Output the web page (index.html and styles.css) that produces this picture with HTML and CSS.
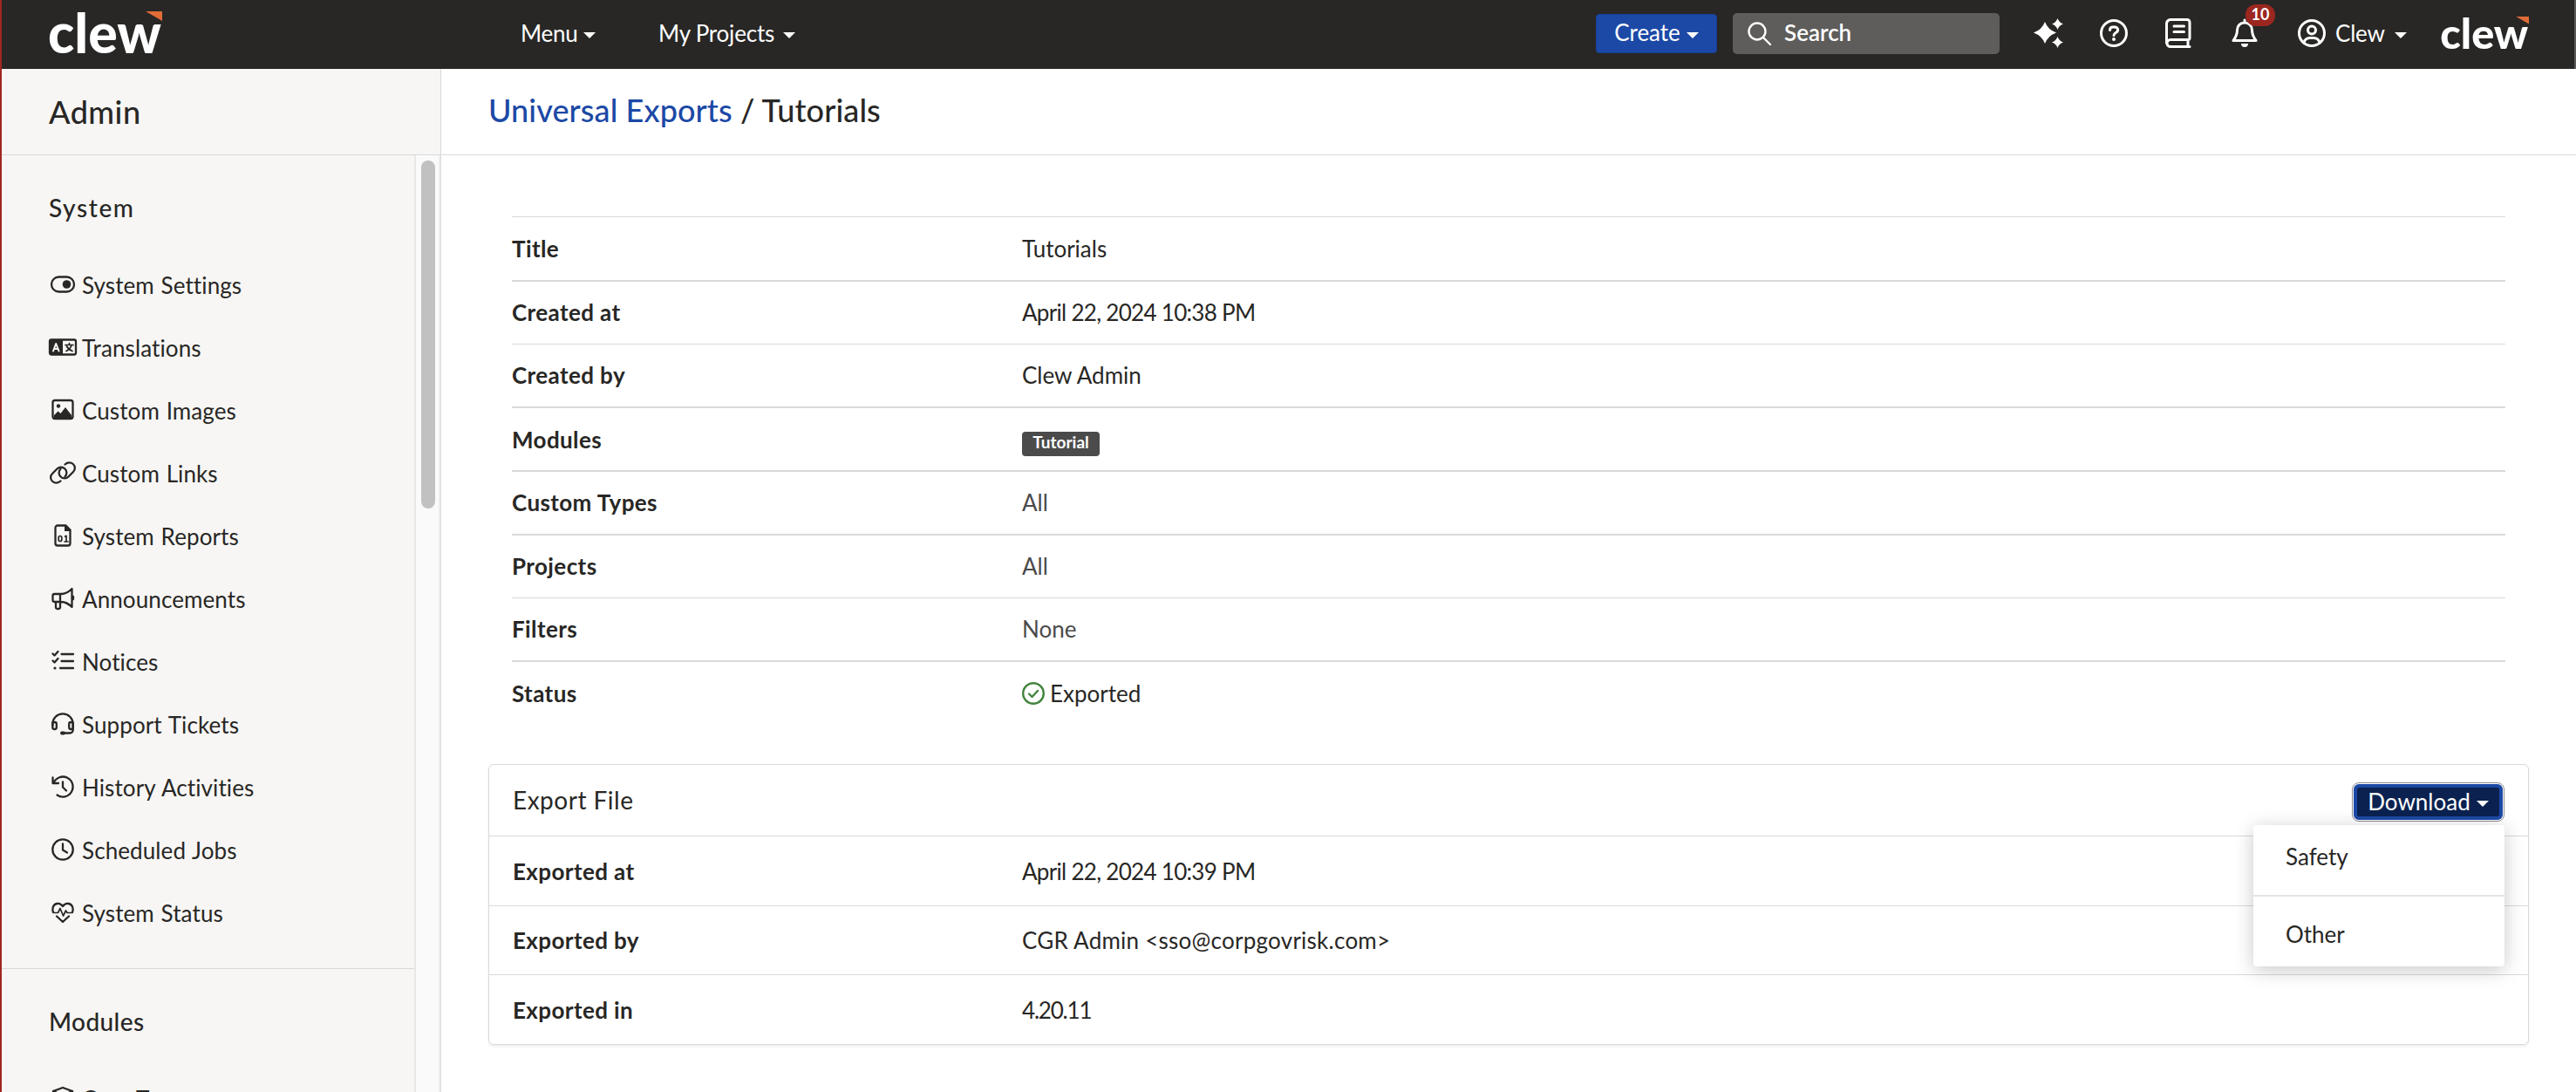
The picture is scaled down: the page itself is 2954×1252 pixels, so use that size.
FILE: index.html
```html
<!DOCTYPE html>
<html lang="en">
<head>
  <meta charset="UTF-8">
  <title>Universal Exports / Tutorials</title>
  <link rel="stylesheet" href="styles.css">
</head>
<body>
  <header class="navbar">
    <svg class="logo" viewBox="0 0 130 50">
      <text x="-1" y="48" textLength="130" lengthAdjust="spacingAndGlyphs">clew</text>
      <path class="logo-mark" d="M111 0h19v11z"/>
    </svg>
    <a class="nav-link menu-link">Menu<i class="caret"></i></a>
    <a class="nav-link projects-link">My Projects<i class="caret"></i></a>
    <div class="nav-right">
      <button class="btn create">Create<i class="caret"></i></button>
      <div class="search">
        <svg width="27" height="27" viewBox="0 0 27 27"><circle cx="11" cy="11" r="9.5"/><path d="M18 18l8 8"/></svg>
        <span>Search</span>
      </div>
      <svg class="nav-icon sparkle" width="34" height="34" viewBox="0 0 34 34">
        <path d="M13 4q3.400 9 13 12.500q-9.600 3.500-13 12.500q-3.400-9-13-12.500q9.600-3.500 13-12.500zM27.500 0q1.600 4.700 6.500 6.500q-4.900 1.800-6.500 6.500q-1.600-4.700-6.500-6.500q4.900-1.800 6.500-6.500zM27.500 21q1.600 4.700 6.500 6.500q-4.900 1.800-6.500 6.500q-1.600-4.700-6.500-6.500q4.900-1.800 6.500-6.500z"/>
      </svg>
      <svg class="nav-icon help" width="32" height="32" viewBox="0 0 32 32">
        <circle cx="16" cy="16" r="14.500"/>
        <path d="M11.500 12.500c0-2.300 1.500-3.500 3.500-3.500h2c2 0 3.700 1.400 3.700 3.500c0 3-4.700 3.200-4.700 6"/>
        <circle class="solid" cx="16" cy="23" r="2"/>
      </svg>
      <svg class="nav-icon book" width="30" height="34" viewBox="0 0 30 34">
        <path d="M6 1.500h19a3 3 0 0 1 3 3v18a2 2 0 0 1-2 2H6a4 4 0 0 0 0 8h22M1.500 28.500V6A4.500 4.500 0 0 1 6 1.500M26 25v7M10 9h11.500M10 15.500h11.500"/>
      </svg>
      <div class="bell">
        <svg class="nav-icon" width="30" height="32" viewBox="0 0 30 32">
          <path d="M15 1v3M15 4c-5 0-8.500 3.600-8.500 8.500c0 5.500-1.500 8-4.500 12h26c-3-4-4.500-6.500-4.500-12C23.500 7.600 20 4 15 4z"/>
          <path class="solid" d="M11 28h8a4 4 0 0 1-8 0z"/>
        </svg>
        <span class="count">10</span>
      </div>
      <svg class="nav-icon user" width="32" height="32" viewBox="0 0 32 32">
        <circle cx="16" cy="16" r="14.500"/><circle cx="16" cy="12.500" r="4.500"/>
        <path d="M7 27c1-4 4-5.500 7-5.500h4c3 0 6 1.500 7 5.500"/>
      </svg>
      <a class="nav-link account">Clew<i class="caret"></i></a>
      <svg class="logo small" viewBox="0 0 130 50">
        <text x="-1" y="48" textLength="130" lengthAdjust="spacingAndGlyphs">clew</text>
        <path class="logo-mark" d="M111 0h19v11z"/>
      </svg>
    </div>
  </header>

  <div class="layout">
    <aside class="sidebar">
      <h1 class="sidebar-title">Admin</h1>
      <div class="sidebar-body">
        <nav class="sections">
          <section class="section">
            <h2 class="wide">System</h2>
            <a class="item"><svg viewBox="0 0 32 26"><rect x="3" y="4.500" width="26" height="17" rx="8.500"/><circle class="solid" cx="20.500" cy="13" r="4.800"/></svg><span>System Settings</span></a>
            <a class="item"><svg viewBox="0 0 32 26"><rect x="1" y="4.500" width="30" height="17" rx="2"/><path class="solid" d="M1 4.500h15v17H1z"/><path class="cut" d="M5 17.500L8.200 9l3.300 8.500M6.300 15h4"/><path class="thin" d="M19 10.500h9M23.500 8.500v2M26 11c-1 3-3 5-6 6.500M20.500 12c1.500 3 3 4 6.500 5.500"/></svg><span>Translations</span></a>
            <a class="item"><svg viewBox="0 0 32 26"><rect x="4.500" y="2" width="23" height="21" rx="2.500"/><circle class="solid" cx="11" cy="8.500" r="2.200"/><path class="solid" d="M6 22v-3l4.500-4.500 3 2.500L19 10l7 9v3z"/></svg><span>Custom Images</span></a>
            <a class="item"><svg viewBox="0 0 32 26"><path d="M13.500 22.500c-3 3-7 2.500-9.300.500c-2.800-2.500-2.700-6.500-.200-9l5.500-5.500c2.500-2.500 6.500-2.500 9 0s2.500 6.500 0 9"/><path d="M18.500 3.500c3-3 7-2.500 9.300-.5c2.800 2.500 2.700 6.500.200 9L22.500 17.500c-2.500 2.500-6.500 2.500-9 0s-2.500-6.500 0-9"/></svg><span>Custom Links</span></a>
            <a class="item"><svg viewBox="0 0 32 26"><path d="M10 1.500h9.500l5 5V22a2.500 2.500 0 0 1-2.500 2.500H10A2.500 2.500 0 0 1 7.500 22V4A2.500 2.500 0 0 1 10 1.500z"/><path class="solid" d="M18 1v7h7z"/><rect class="thin" x="11.200" y="13.500" width="3.600" height="6" rx="1.800"/><path class="thin" d="M18.500 14l1.500-.7v6.500M18 20h4"/></svg><span>System Reports</span></a>
            <a class="item"><svg viewBox="0 0 32 26"><path d="M6.500 8H14c5 0 9-2.500 12.500-6v21C23 19.500 19 17 14 17H6.500a2 2 0 0 1-2-2v-5a2 2 0 0 1 2-2zM13 8v9M8 17v6.500a1.500 1.500 0 0 0 1.500 1.500h2a1.500 1.500 0 0 0 1.500-1.500V17M28 11v3"/></svg><span>Announcements</span></a>
            <a class="item"><svg viewBox="0 0 32 26"><path d="M4.500 4.500l2 2 4-4.500M4.500 12.500l2 2 4-4.500M14.500 5H28M14.500 13H28M13 21h15"/><circle class="solid" cx="7" cy="21" r="1.600"/></svg><span>Notices</span></a>
            <a class="item"><svg viewBox="0 0 32 26"><path d="M4.300 15v-2a11.700 11.700 0 0 1 23.400 0v7a3.500 3.500 0 0 1-3.500 3.500H17"/><rect x="4.300" y="11" width="4.500" height="8" rx="2"/><rect x="23.200" y="11" width="4.500" height="8" rx="2"/><rect class="solid" x="13" y="21.500" width="6" height="4" rx="2"/></svg><span>Support Tickets</span></a>
            <a class="item"><svg viewBox="0 0 32 26"><path d="M4.500 2.500V9H11M5.500 8.500A11.500 11.500 0 1 1 9.500 22.500M16 7.500V13.500l4 4"/></svg><span>History Activities</span></a>
            <a class="item"><svg viewBox="0 0 32 26"><circle cx="16" cy="13" r="11.700"/><path d="M16 6.500V13.500l5 3"/></svg><span>Scheduled Jobs</span></a>
            <a class="item"><svg viewBox="0 0 32 26"><path d="M5 13c-1.500-4-.5-9 4.500-10c3-.5 5 1 6.500 3c1.500-2 3.500-3.500 6.500-3C27.500 4 28.500 9 27 13M9 17.500l7 6.500 7-6.500"/><path class="pulse" d="M6 13.500h4.500l2.500-5 3.500 8.500 3-6 1.500 2.500h5"/></svg><span>System Status</span></a>
          </section>
          <section class="section">
            <h2>Modules</h2>
            <a class="item"><svg viewBox="0 0 32 26"><path d="M5 5l11-4 11 4v13l-11 7-11-7zM5 5l11 5 11-5M16 10v14"/></svg><span>Core Types</span></a>
          </section>
        </nav>
        <div class="scrollbar"><div class="thumb"></div></div>
      </div>
    </aside>

    <main class="content">
      <h1 class="breadcrumb"><a>Universal Exports</a> / Tutorials</h1>

      <div class="details">
        <div class="row"><b>Title</b><span>Tutorials</span></div>
        <div class="row thick"><b>Created at</b><span class="date">April 22, 2024 10:38 PM</span></div>
        <div class="row"><b>Created by</b><span>Clew Admin</span></div>
        <div class="row thick"><b>Modules</b><span class="tag">Tutorial</span></div>
        <div class="row thick"><b>Custom Types</b><span class="muted">All</span></div>
        <div class="row thick"><b>Projects</b><span class="muted">All</span></div>
        <div class="row"><b>Filters</b><span class="muted">None</span></div>
        <div class="row thick"><b>Status</b><span class="status"><svg width="26" height="26" viewBox="0 0 26 26"><circle cx="13" cy="13" r="11.800"/><path d="M8 13.500l3.500 3.500 6.500-7"/></svg>Exported</span></div>
      </div>

      <div class="card">
        <div class="card-head">
          <h3>Export File</h3>
          <div class="dropdown">
            <button class="btn download">Download<i class="caret"></i></button>
            <div class="dropdown-menu">
              <a>Safety</a>
              <a>Other</a>
            </div>
          </div>
        </div>
        <div class="card-row"><b>Exported at</b><span class="date">April 22, 2024 10:39 PM</span></div>
        <div class="card-row"><b>Exported by</b><span class="email">CGR Admin &lt;sso@corpgovrisk.com&gt;</span></div>
        <div class="card-row"><b>Exported in</b><span class="version">4.20.11</span></div>
      </div>
    </main>
  </div>
</body>
</html>
```
FILE: styles.css
```css
* {
  box-sizing: border-box;
}
body {
  margin: 0;
  height: 1252px;
  overflow: hidden;
  border-left: 2px solid #a02622;
  font-family: Lato, "Liberation Sans", sans-serif;
  font-size: 26px;
  color: #282725;
  background: white;
}
h1, h2, h3 {
  margin: 0;
  font-weight: 500;
}
b {
  letter-spacing: 0.4px;
}
svg {
  flex: none;
  fill: none;
  stroke: currentColor;
  stroke-linecap: round;
  stroke-linejoin: round;
  overflow: visible;
}
.solid {
  fill: currentColor;
  stroke: none;
}
.caret {
  display: inline-block;
  border: 7px solid transparent;
  border-top-color: currentColor;
  border-bottom: 0;
}

/* top bar */
.navbar {
  display: flex;
  align-items: center;
  height: 79px;
  padding: 0 52px 3px 54px;
  background: #282725;
  color: white;
  border-right: 2px solid #595959;
}
.logo {
  width: 130px;
  height: 50px;
  fill: white;
  stroke: none;
}
.logo text {
  font-size: 62px;
  font-weight: 900;
}
.logo-mark {
  fill: #e06c38;
}
.logo.small {
  width: 101px;
  height: 39px;
  margin-left: 39px;
}
.nav-link {
  display: flex;
  align-items: center;
  justify-content: space-between;
  line-height: 32px;
  letter-spacing: -0.2px;
}
.nav-link .caret {
  margin-top: 5px;
}
.menu-link {
  width: 86px;
  margin-left: 411px;
}
.projects-link {
  width: 157px;
  margin-left: 72px;
}
.nav-right {
  display: flex;
  align-items: center;
  margin-left: auto;
}
.btn {
  display: flex;
  align-items: center;
  justify-content: center;
  font: inherit;
  color: white;
  border: 1px solid #173f97;
  border-radius: 4px;
  padding: 0 0 2px;
}
.btn .caret {
  margin: 6px 0 0 7px;
}
.create {
  width: 139px;
  height: 45px;
  background: #1c49a6;
}
.search {
  display: flex;
  align-items: center;
  gap: 15px;
  width: 306px;
  height: 47px;
  margin-left: 18px;
  padding-left: 17px;
  border-radius: 5px;
  background: #5e5d5b;
  font-weight: 600;
}
.search svg {
  stroke-width: 2.4;
}
.search span {
  margin-bottom: 2px;
}
.nav-icon {
  stroke-width: 3;
}
.sparkle {
  margin-left: 39px;
  fill: white;
  stroke: none;
}
.help {
  margin-left: 42px;
}
.book {
  margin-left: 43px;
}
.bell {
  position: relative;
  display: flex;
  margin-left: 46px;
}
.count {
  position: absolute;
  left: 16px;
  top: -17px;
  width: 34px;
  height: 25px;
  border-radius: 12px;
  background: #9c2720;
  font-size: 18px;
  font-weight: 700;
  line-height: 23px;
  text-align: center;
}
.user {
  margin-left: 46px;
}
.account {
  width: 82px;
  margin-left: 11px;
}

/* sidebar */
.layout {
  display: flex;
  height: 1173px;
}
.sidebar {
  display: flex;
  flex-direction: column;
  width: 504px;
  border-right: 1px solid #dadada;
  background: #f7f6f4;
}
.sidebar-title {
  height: 99px;
  padding-left: 54px;
  border-bottom: 1px solid #d9d9d9;
  font-size: 36px;
  letter-spacing: 0.5px;
  line-height: 98px;
}
.sidebar-body {
  display: flex;
  flex: 1;
  min-height: 0;
}
.sections {
  flex: 1;
  overflow: hidden;
}
.section {
  padding-bottom: 28px;
  border-bottom: 1px solid #d9d9d9;
}
.section h2 {
  height: 112px;
  padding-left: 54px;
  font-size: 28px;
  letter-spacing: 0.4px;
  line-height: 120px;
}
.section h2.wide {
  letter-spacing: 1.6px;
}
.item {
  display: flex;
  align-items: center;
  gap: 6px;
  height: 72px;
  padding-left: 54px;
  letter-spacing: 0.1px;
  word-spacing: 1px;
}
.item span {
  padding-top: 2px;
}
.item svg {
  width: 32px;
  height: 26px;
  stroke-width: 2.3;
}
.item .cut {
  stroke: #f7f6f4;
  stroke-width: 2;
}
.item .thin {
  stroke-width: 1.7;
}
.item .pulse {
  stroke-width: 1.7;
}
.scrollbar {
  width: 30px;
  padding: 6px 0 0 6px;
  border-left: 2px solid #e7e7e7;
  border-right: 2px solid #ededed;
  background: #fafafa;
}
.thumb {
  width: 16px;
  height: 399px;
  border-radius: 8px;
  background: #c1c1c1;
}

/* content */
.content {
  flex: 1;
}
.breadcrumb {
  height: 99px;
  padding-left: 54px;
  border-bottom: 1px solid #d9d9d9;
  font-size: 36px;
  letter-spacing: 0.1px;
  line-height: 94px;
}
.breadcrumb a {
  color: #1c49a6;
}
.details {
  margin: 70px 81px 0;
}
.row {
  display: grid;
  grid-template-columns: 585px 1fr;
  align-items: center;
  height: 72.75px;
  border-top: 1px solid #d9d9d9;
}
.thick {
  border-top-width: 2px;
}
.muted {
  color: #4b4b4b;
}
.date {
  letter-spacing: -0.7px;
}
.email {
  letter-spacing: 0.25px;
}
.version {
  letter-spacing: -1.2px;
}
.tag {
  justify-self: start;
  width: 89px;
  height: 28px;
  margin-top: 10px;
  border-radius: 4px;
  background: #4b4b4b;
  color: white;
  font-size: 19px;
  font-weight: 700;
  line-height: 23px;
  text-align: center;
}
.status {
  display: flex;
  align-items: center;
  gap: 6px;
}
.status svg {
  color: #43843d;
  stroke-width: 2.4;
}
.card {
  margin: 46px 54px 0;
  border: 1px solid #d9d9d9;
  border-radius: 6px;
  box-shadow: 0 2px 3px rgba(0, 0, 0, 0.07);
}
.card-head {
  display: flex;
  justify-content: space-between;
  height: 81px;
  padding: 0 27px;
}
.card-head h3 {
  font-size: 28px;
  font-weight: 400;
  letter-spacing: 0.5px;
  line-height: 80px;
}
.card-row {
  display: grid;
  grid-template-columns: 584px 1fr;
  align-items: center;
  height: 79.67px;
  padding: 1px 27px 0;
  border-top: 1px solid #d9d9d9;
}
.dropdown {
  position: relative;
  padding-top: 22px;
}
.download {
  width: 171px;
  height: 41px;
  margin-right: 2px;
  border: 4px solid #1c49a6;
  border-radius: 6px;
  background: #0b2250;
  outline: 1px solid #8b8d94;
  outline-offset: 1px;
}
/* menu lies over the card rows */
.dropdown-menu {
  position: absolute;
  top: 69px;
  right: 0;
  z-index: 1;
  width: 288px;
  border-radius: 4px;
  background: white;
  box-shadow: 0 4px 22px rgba(0, 0, 0, 0.22);
}
.dropdown-menu a {
  display: block;
  height: 80px;
  padding-left: 37px;
  line-height: 73px;
}
.dropdown-menu a + a {
  height: 82px;
  border-top: 2px solid #e4e4e4;
  line-height: 87px;
}
```
